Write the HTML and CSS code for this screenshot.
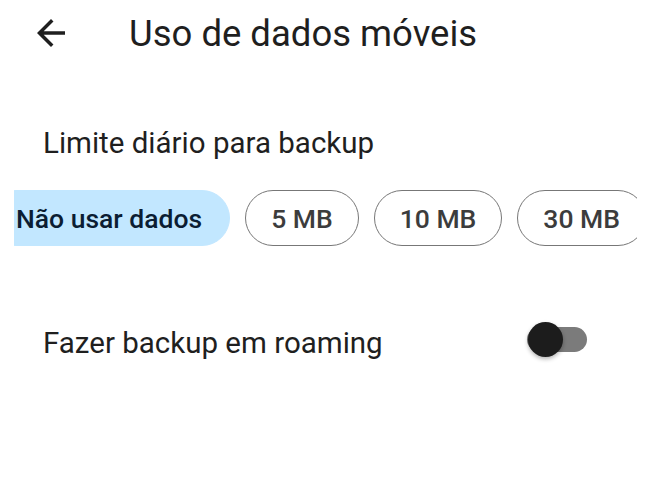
FILE: index.html
```html
<!DOCTYPE html>
<html lang="pt-BR">
<head>
  <meta charset="UTF-8" />
  <meta name="viewport" content="width=device-width, initial-scale=1.0" />
  <title>Uso de dados móveis</title>
  <link rel="stylesheet" href="styles.css">
</head>
<body>
  <div class="header">
    <svg class="back" viewBox="0 0 24 24" width="42" height="42">
      <path d="M20 11H7.83l5.59-5.59L12 4l-8 8 8 8 1.41-1.41L7.83 13H20v-2z" fill="#1f1f1f"/>
    </svg>
    <h1>Uso de dados móveis</h1>
  </div>

  <div class="label">Limite diário para backup</div>

  <div class="chips">
    <div class="chips-track">
      <div class="chip selected">Não usar dados</div>
      <div class="chip">5 MB</div>
      <div class="chip">10 MB</div>
      <div class="chip">30 MB</div>
    </div>
  </div>

  <div class="row">
    <div class="row-text">Fazer backup em roaming</div>
    <div class="switch">
      <div class="track"></div>
      <div class="thumb"></div>
    </div>
  </div>
</body>
</html>
```

FILE: styles.css
```css
:root {
  --text: #1f1f1f;
  --chip-border: #777;
  --chip-selected: #c2e7ff;
}

* {
  box-sizing: border-box;
  margin: 0;
  padding: 0;
  font-family: Roboto, 'Liberation Sans', sans-serif;
}

body {
  background-color: white;
  color: var(--text);
  width: 650px;
  height: 480px;
  overflow: hidden;
}

.header {
  display: flex;
  align-items: center;
  height: 42px;
  margin-top: 12px;
  padding-left: 30px;
}

.back {
  flex: none;
}

h1 {
  font-weight: 400;
  font-size: 36.5px;
  line-height: 44px;
  margin-left: 57px;
  margin-top: 2px;
  white-space: nowrap;
}

.label {
  font-size: 29.5px;
  line-height: 34px;
  margin-top: 72px;
  padding-left: 43px;
}

.chips {
  margin: 30px 0 0 14px;
  width: 623px;
  overflow: hidden;
}

.chips-track {
  display: flex;
  gap: 15px;
  margin-left: -26px;
}

.chip {
  flex: none;
  height: 56px;
  padding: 0 25px;
  border: 1.5px solid var(--chip-border);
  border-radius: 28px;
  display: flex;
  align-items: center;
  font-size: 26.5px;
  font-weight: 500;
  color: #3c3c3c;
  white-space: nowrap;
}

.chip.selected {
  padding: 0 27px;
  background-color: var(--chip-selected);
  border-color: var(--chip-selected);
  color: #0b1d33;
}

.row {
  display: flex;
  align-items: center;
  justify-content: space-between;
  margin-top: 68px;
  padding: 0 63px 0 43px;
  height: 50px;
}

.row-text {
  font-size: 29.5px;
  line-height: 36px;
  padding-top: 8px;
}

.switch {
  position: relative;
  width: 60px;
  height: 36px;
}

.track {
  position: absolute;
  left: 0;
  top: 5.5px;
  width: 60px;
  height: 25px;
  border-radius: 12.5px;
  background-color: #7b7b7b;
}

.thumb {
  position: absolute;
  left: 1px;
  top: 0.5px;
  width: 35px;
  height: 35px;
  border-radius: 50%;
  background-color: #1c1c1c;
  box-shadow: 0 2px 4px rgba(0, 0, 0, 0.3);
}
```
